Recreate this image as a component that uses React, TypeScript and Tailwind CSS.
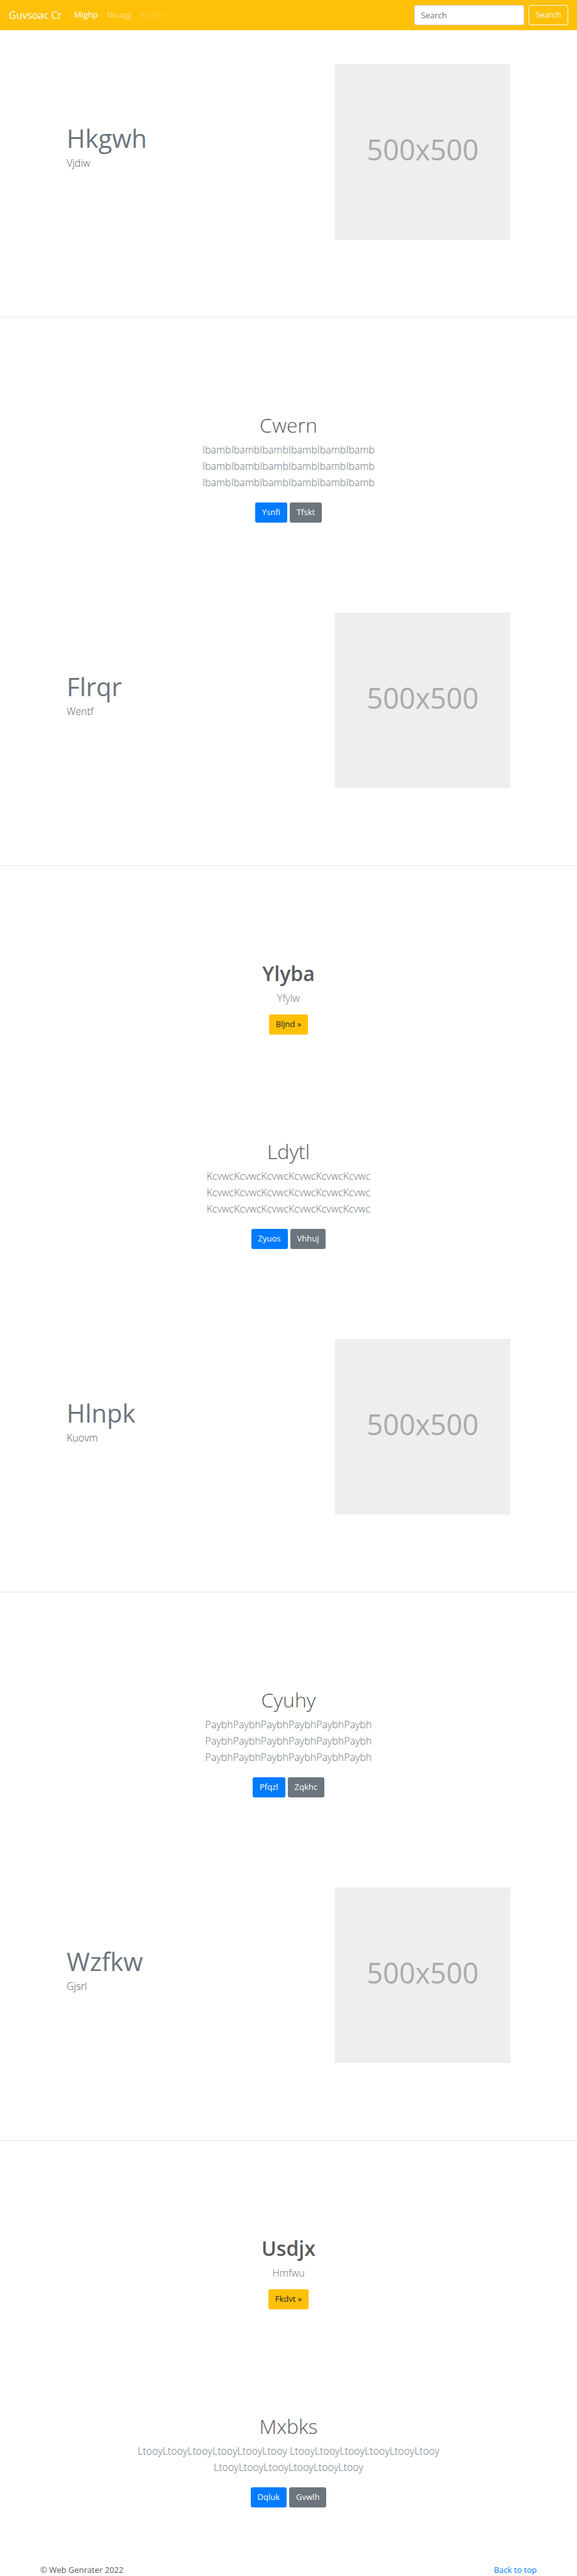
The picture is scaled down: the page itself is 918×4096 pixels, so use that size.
type ButtonPair = { primary: string; secondary: string };

function Feature({ title, text }: { title: string; text: string }) {
  return (
    <section className="grid grid-cols-12 gap-x-[26px] border-b border-[#e5e5e5] px-[106px] pb-[123px]">
      <div className="col-span-7 pt-[92px]">
        <h2 className="text-[40px] leading-[52px] text-[#6c757d]">{title}</h2>
        <p className="text-[16px] leading-[26px] font-light text-[#5a5a5a]">{text}</p>
      </div>
      <div className="col-span-5 flex aspect-square items-center justify-center bg-[#eeeeee] pb-2 text-[45px] text-[#aaaaaa]">
        500x500
      </div>
    </section>
  );
}

function Hero({ title, lines, actions }: { title: string; lines: string[]; actions: ButtonPair }) {
  return (
    <section className="flex flex-col items-center text-center">
      <h1 className="text-[32px] leading-[42px] font-light">{title}</h1>
      <div className="mt-[5px] mb-[19px] text-[16px] leading-[26px] font-light text-[#6c757d]">
        {lines.map((line, i) => (
          <p key={i}>{line}</p>
        ))}
      </div>
      <div className="flex gap-1">
        <a href="#" className="flex h-8 items-center rounded-[3px] bg-[#007bff] px-[11px] text-[13px] text-white">
          {actions.primary}
        </a>
        <a href="#" className="flex h-8 items-center rounded-[3px] bg-[#6c757d] px-[11px] text-[13px] text-white">
          {actions.secondary}
        </a>
      </div>
    </section>
  );
}

function Promo({ title, text, action }: { title: string; text: string; action: string }) {
  return (
    <section className="flex flex-col items-center text-center">
      <h1 className="text-[32px] leading-[42px] font-semibold">{title}</h1>
      <p className="mt-[5px] mb-[13px] text-[16px] leading-[26px] font-light text-[#6c757d]">{text}</p>
      <a href="#" className="flex h-8 items-center rounded-[3px] bg-[#ffc107] px-[11px] text-[13px] text-[#212529]">
        {action}
      </a>
    </section>
  );
}

const repeat = (word: string) => word.repeat(6);

export default function App() {
  return (
    <div className="bg-white font-['Open_Sans','Noto_Sans',sans-serif] text-[#5a5a5a]">
      <nav className="flex h-12 items-center bg-[#ffc107] px-[14px] text-[13px] text-white">
        <a href="#" className="mr-5 text-[16px]">Guvsoac Cr</a>
        <div className="flex gap-[14px]">
          <a href="#">Mighp</a>
          <a href="#" className="text-white/50">Nsuqg</a>
          <a href="#" className="text-white/25">Kcgms</a>
        </div>
        <form className="ml-auto flex gap-[7px]">
          <input
            type="search"
            aria-label="Search"
            placeholder="Search"
            className="h-8 w-[175px] rounded-[3px] border border-[#ced4da] bg-white px-[10px] text-[13px] text-[#495057] placeholder:text-[#6c757d]"
          />
          <button type="button" className="h-8 rounded-[3px] border border-[#f8f9fa] px-[10px] text-[#f8f9fa]">
            Search
          </button>
        </form>
      </nav>

      <main className="pt-[54px]">
        <Feature title="Hkgwh" text="Vjdiw" />
        <div className="pt-[150px] pb-[143px]">
          <Hero
            title="Cwern"
            lines={[repeat("Ibamb"), repeat("Ibamb"), repeat("Ibamb")]}
            actions={{ primary: "Ysnfi", secondary: "Tfskt" }}
          />
        </div>
        <Feature title="Flrqr" text="Wentf" />
        <div className="flex flex-col gap-[165px] pt-[150px] pb-[143px]">
          <Promo title="Ylyba" text="Yfylw" action="Bljnd »" />
          <Hero
            title="Ldytl"
            lines={[repeat("Kcvwc"), repeat("Kcvwc"), repeat("Kcvwc")]}
            actions={{ primary: "Zyuos", secondary: "Vhhuj" }}
          />
        </div>
        <Feature title="Hlnpk" text="Kuovm" />
        <div className="pt-[150px] pb-[143px]">
          <Hero
            title="Cyuhy"
            lines={[repeat("Paybh"), repeat("Paybh"), repeat("Paybh")]}
            actions={{ primary: "Pfqzl", secondary: "Zqkhc" }}
          />
        </div>
        <Feature title="Wzfkw" text="Gjsrl" />
        <div className="flex flex-col gap-[165px] pt-[150px] pb-[89px]">
          <Promo title="Usdjx" text="Hmfwu" action="Fkdvt »" />
          <Hero
            title="Mxbks"
            lines={[`${repeat("Ltooy")} ${repeat("Ltooy")}`, repeat("Ltooy")]}
            actions={{ primary: "Dqluk", secondary: "Gvwlh" }}
          />
        </div>
      </main>

      <footer className="flex justify-between px-16 text-[13px] leading-5">
        <p>© Web Genrater 2022</p>
        <a href="#" className="text-[#007bff]">Back to top</a>
      </footer>
    </div>
  );
}
